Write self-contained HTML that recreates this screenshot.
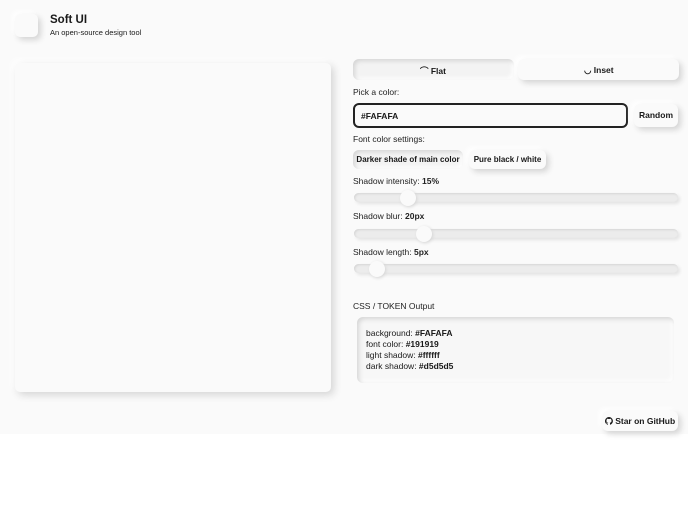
<!DOCTYPE html>
<html><head><style>
*{box-sizing:border-box;margin:0;padding:0}
body{width:688px;height:512px;background:#fff;font-family:"Liberation Sans",sans-serif;color:#191919;position:relative;overflow:hidden}
.bg{position:absolute;left:0;top:0;width:688px;height:434px;background:#fafafa}
.abs{position:absolute}
.sh{box-shadow:3px 3px 6px #d5d5d5,-3px -3px 6px #fff}
.lbl{font-size:8.5px;color:#222}
.track{position:absolute;left:354px;width:324px;height:9px;border-radius:5px;background:#ececec;box-shadow:inset 1px 1px 2px #d5d5d5,2px 2px 3px #e3e3e3}
.thumb{position:absolute;width:16px;height:16px;border-radius:50%;background:#fafafa;box-shadow:1px 1px 3px #d5d5d5}
</style></head><body>
<div class="bg"></div>
<div class="abs sh" style="left:15px;top:14px;width:23px;height:23px;border-radius:5px;background:#fafafa"></div>
<div class="abs" style="left:50px;top:14px;font-size:11.5px;font-weight:bold">Soft UI</div>
<div class="abs" style="left:50px;top:28px;font-size:7.5px">An open-source design tool</div>
<div class="abs sh" style="left:15px;top:63px;width:316px;height:329px;border-radius:5px;background:#fafafa;box-shadow:3px 3px 8px #d5d5d5,-3px -3px 8px #fff"></div>

<div class="abs" style="left:353px;top:59px;width:161px;height:21px;border-radius:6px;background:#f3f3f3;box-shadow:inset 2px 2px 4px #d5d5d5,inset -2px -2px 4px #fff"></div>
<div class="abs" style="left:420px;top:65px;font-size:8.5px;font-weight:bold">⌒ Flat</div>
<div class="abs sh" style="left:518px;top:59px;width:161px;height:21px;border-radius:6px;background:#fafafa"></div>
<div class="abs" style="left:584px;top:65px;font-size:8.5px;font-weight:bold">◡ Inset</div>

<div class="abs lbl" style="left:353px;top:87px">Pick a color:</div>
<div class="abs" style="left:353px;top:103px;width:275px;height:25px;border:2px solid #222;border-radius:6px;background:#fafafa;font-size:8.5px;font-weight:bold;padding:6px 6px">#FAFAFA</div>
<div class="abs sh" style="left:634px;top:104px;width:44px;height:23px;border-radius:6px;background:#fafafa;font-size:8.5px;font-weight:bold;text-align:center;line-height:23px">Random</div>

<div class="abs lbl" style="left:353px;top:134px">Font color settings:</div>
<div class="abs" style="left:353px;top:150px;width:110px;height:19px;border-radius:6px;background:#f3f3f3;box-shadow:inset 2px 2px 4px #d5d5d5,inset -2px -2px 4px #fff;font-size:8px;font-weight:bold;text-align:center;line-height:19px">Darker shade of main color</div>
<div class="abs sh" style="left:469px;top:150px;width:77px;height:19px;border-radius:6px;background:#fafafa;font-size:8px;font-weight:bold;text-align:center;line-height:19px">Pure black / white</div>

<div class="abs lbl" style="left:353px;top:176px">Shadow intensity: <b>15%</b></div>
<div class="track" style="top:193px"></div><div class="thumb" style="left:400px;top:190px"></div>
<div class="abs lbl" style="left:353px;top:211px">Shadow blur: <b>20px</b></div>
<div class="track" style="top:229px"></div><div class="thumb" style="left:416px;top:226px"></div>
<div class="abs lbl" style="left:353px;top:247px">Shadow length: <b>5px</b></div>
<div class="track" style="top:264px"></div><div class="thumb" style="left:369px;top:261px"></div>

<div class="abs lbl" style="left:353px;top:301px">CSS / TOKEN Output</div>
<div class="abs" style="left:357px;top:317px;width:317px;height:66px;border-radius:6px;background:#f7f7f7;box-shadow:inset 2px 2px 5px #d5d5d5,inset -2px -2px 5px #fff;padding:11px 9px;font-size:8.5px;line-height:11px">
background: <b>#FAFAFA</b><br>font color: <b>#191919</b><br>light shadow: <b>#ffffff</b><br>dark shadow: <b>#d5d5d5</b></div>

<div class="abs sh" style="left:602px;top:411px;width:76px;height:20px;border-radius:6px;background:#fafafa;font-size:8.5px;font-weight:bold;text-align:center;line-height:20px">
<svg width="8" height="8" viewBox="0 0 16 16" style="vertical-align:-1px"><path fill="#191919" d="M8 0a8 8 0 0 0-2.5 15.6c.4 0 .5-.2.5-.4v-1.5c-2.2.5-2.7-1-2.7-1-.4-.9-.9-1.2-.9-1.2-.7-.5.1-.5.1-.5.8.1 1.200.8 1.200.8.700 1.300 1.900.900 2.300.700.100-.500.300-.900.500-1.100-1.800-.200-3.600-.900-3.600-4 0-.900.300-1.600.800-2.100-.100-.200-.400-1 .100-2.100 0 0 .700-.200 2.200.800a7.400 7.400 0 0 1 4 0c1.500-1 2.200-.800 2.200-.800.400 1.100.200 1.900.100 2.100.500.600.800 1.300.800 2.100 0 3.100-1.900 3.800-3.600 4 .300.300.500.800.500 1.500v2.200c0 .200.100.500.600.400A8 8 0 0 0 8 0z"/></svg> Star on GitHub</div>
</body></html>
